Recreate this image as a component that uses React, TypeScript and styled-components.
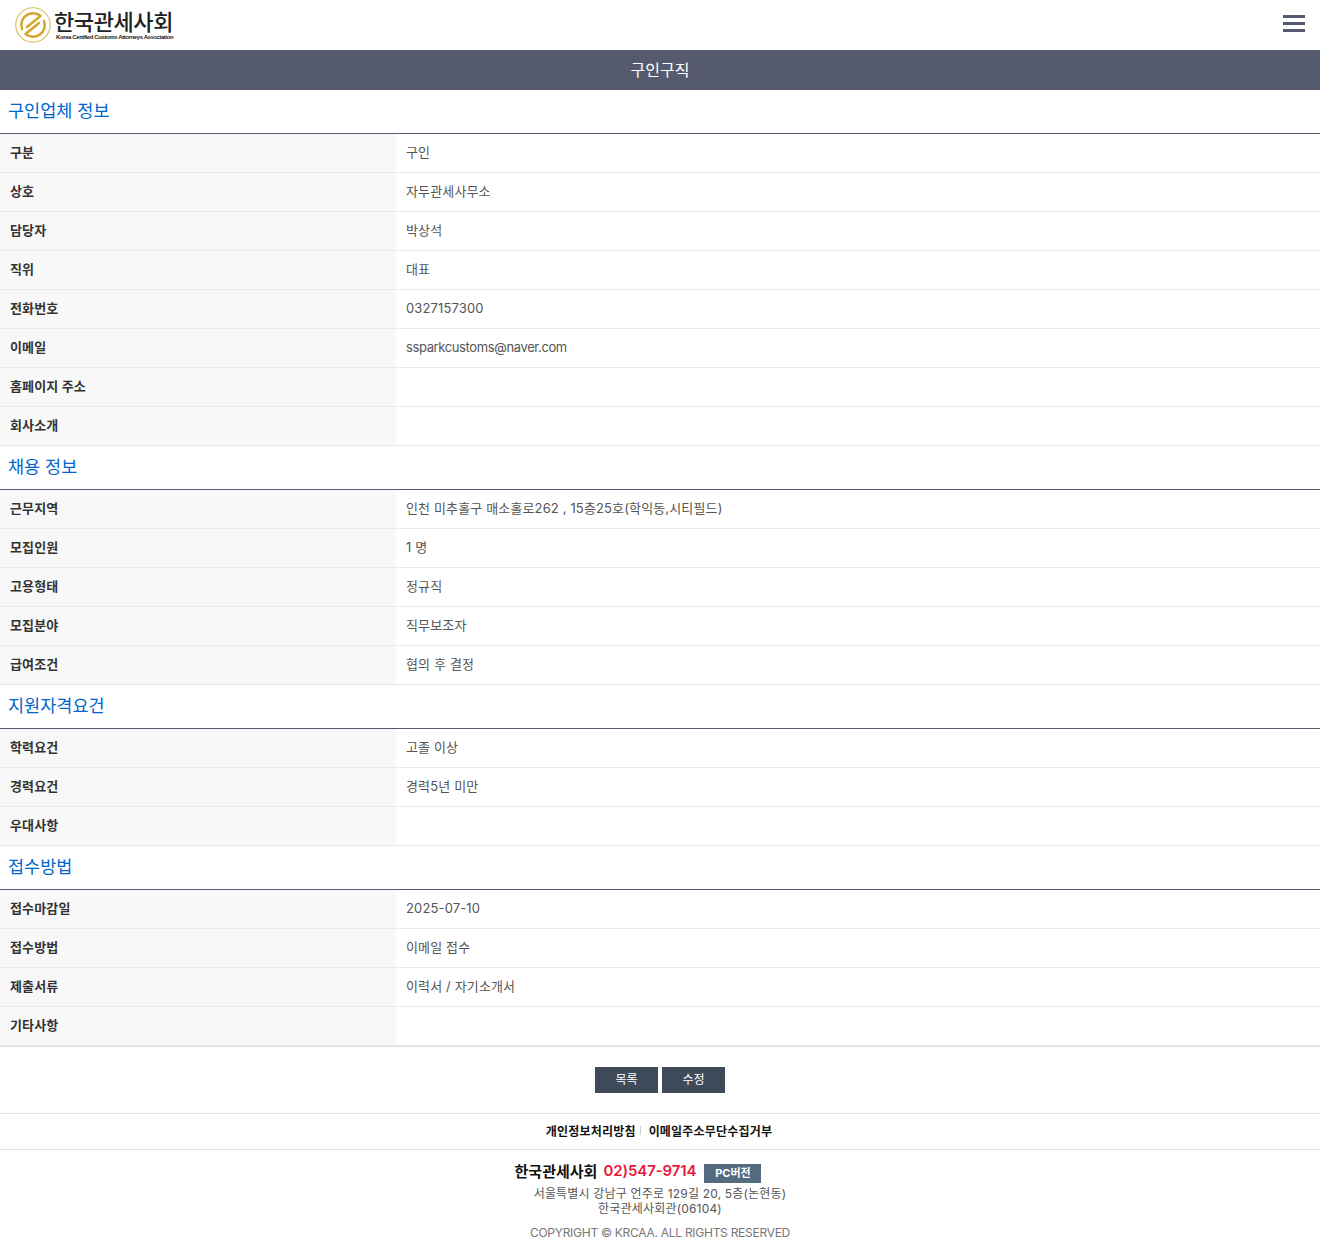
import * as React from "react";
import styled, { createGlobalStyle } from "styled-components";

const Global = createGlobalStyle`
    html, body { margin: 0; padding: 0; background: #fff; }
    body { font-family: Inter, "Noto Sans CJK KR", "Noto Sans", sans-serif; }
`;

const Page = styled.div`
    width: 1320px;
    height: 1254px;
    overflow: hidden;
`;

const Header = styled.header`
    height: 50px;
    padding: 0 15px;
    box-sizing: border-box;
    display: flex;
    align-items: center;
    justify-content: space-between;
`;

const Logo = styled.div`
    display: flex;
    align-items: center;
    gap: 3px;
`;

const LogoText = styled.div`
    display: flex;
    flex-direction: column;
    color: #222;
`;

const LogoName = styled.div`
    font-size: 22px;
    line-height: 24px;
    font-weight: 500;
    letter-spacing: -0.4px;
`;

const LogoSub = styled.div`
    font-family: "Liberation Sans", sans-serif;
    font-size: 6px;
    line-height: 7px;
    letter-spacing: -0.4px;
    font-weight: 700;
    white-space: nowrap;
    margin-left: 2px;
`;

const Burger = styled.div`
    width: 22px;
    display: flex;
    flex-direction: column;
    gap: 4px;
    margin-bottom: 3px;
    span {
        height: 3px;
        background: #555a6e;
    }
`;

const TitleBar = styled.h1`
    margin: 0;
    height: 40px;
    background: #555a6e;
    color: #fff;
    font-size: 16px;
    font-weight: 400;
    line-height: 40px;
    text-align: center;
`;

const SectionTitle = styled.h2`
    margin: 0;
    height: 44px;
    box-sizing: border-box;
    padding-left: 8px;
    border-bottom: 1px solid #555a6e;
    color: #0066cc;
    font-size: 17.5px;
    font-weight: 400;
    line-height: 41px;
`;

const Row = styled.div`
    display: flex;
    height: 39px;
    box-sizing: border-box;
    border-bottom: 1px solid #e9e9e9;
`;

const Label = styled.div`
    width: 396px;
    padding-left: 10px;
    box-sizing: border-box;
    background: #f8f8f8;
    color: #333;
    font-size: 13px;
    font-weight: 700;
    line-height: 36px;
    letter-spacing: 0.15px;
`;

const Value = styled.div<{ $latin?: boolean }>`
    flex: 1;
    padding-left: 10px;
    color: #555;
    font-size: 13px;
    line-height: 36px;
    letter-spacing: ${(p) => (p.$latin ? "-0.38px" : "0.14px")};
`;

const Buttons = styled.div`
    border-top: 1px solid #ddd;
    height: 67px;
    display: flex;
    justify-content: center;
    align-items: flex-start;
    gap: 4px;
    padding-top: 20px;
    box-sizing: border-box;
`;

const Button = styled.button`
    width: 63px;
    height: 26px;
    border: 0;
    padding: 0 0 3px;
    background: #3f4a5b;
    color: #fff;
    font-family: inherit;
    font-size: 12px;
`;

const Links = styled.div`
    border-top: 1px solid #e2e2e2;
    border-bottom: 1px solid #e2e2e2;
    height: 37px;
    padding: 0 2px 2px 0;
    box-sizing: border-box;
    display: flex;
    justify-content: center;
    align-items: center;
    font-size: 12px;
    font-weight: 700;
    letter-spacing: 0.2px;
    color: #111;
`;

const Divider = styled.span`
    width: 1px;
    height: 9px;
    background: #ccc;
    margin: 0 8px 0 4px;
`;

const Footer = styled.footer`
    text-align: center;
    padding-top: 8px;
`;

const FooterHead = styled.div`
    display: flex;
    justify-content: center;
    align-items: center;
    height: 24px;
    margin-bottom: 4px;
    padding-right: 44px;
    font-size: 15px;
    font-weight: 700;
    color: #111;
`;

const Phone = styled.span`
    color: #e8173c;
    font-weight: 600;
    margin-left: 6px;
    letter-spacing: -0.1px;
`;

const PcButton = styled.span`
    width: 57px;
    height: 19px;
    margin-left: 8px;
    margin-top: 7px;
    background: #546a7f;
    color: #fff;
    font-size: 11px;
    font-weight: 700;
    line-height: 19px;
`;

const Address = styled.div`
    color: #555;
    font-size: 12px;
    line-height: 15px;
    letter-spacing: 0.18px;
`;

const Copyright = styled.div`
    margin-top: 9px;
    color: #777;
    font-size: 12px;
    line-height: 16px;
    letter-spacing: -0.27px;
`;

const LogoMark = () => (
    <svg width="36" height="36" viewBox="0 0 36 36">
        <circle cx="18" cy="18" r="17.2" fill="none" stroke="#dcbc5c" strokeWidth="1.1" />
        <path
            d="M7 22 A11.7 11.7 0 0 1 25.5 9 L12 20 M29 14 A11.7 11.7 0 0 1 10.5 27 L24 16"
            fill="none"
            stroke="#d4a72c"
            strokeWidth="2.5"
            strokeLinejoin="round"
            strokeLinecap="round"
        />
    </svg>
);

const sections: { title: string; rows: [string, string][] }[] = [
    {
        title: "구인업체 정보",
        rows: [
            ["구분", "구인"],
            ["상호", "자두관세사무소"],
            ["담당자", "박상석"],
            ["직위", "대표"],
            ["전화번호", "0327157300"],
            ["이메일", "ssparkcustoms@naver.com"],
            ["홈페이지 주소", ""],
            ["회사소개", ""],
        ],
    },
    {
        title: "채용 정보",
        rows: [
            ["근무지역", "인천 미추홀구 매소홀로262 , 15층25호(학익동,시티필드)"],
            ["모집인원", "1 명"],
            ["고용형태", "정규직"],
            ["모집분야", "직무보조자"],
            ["급여조건", "협의 후 결정"],
        ],
    },
    {
        title: "지원자격요건",
        rows: [
            ["학력요건", "고졸 이상"],
            ["경력요건", "경력5년 미만"],
            ["우대사항", ""],
        ],
    },
    {
        title: "접수방법",
        rows: [
            ["접수마감일", "2025-07-10"],
            ["접수방법", "이메일 접수"],
            ["제출서류", "이력서 / 자기소개서"],
            ["기타사항", ""],
        ],
    },
];

export default function App() {
    return (
        <Page>
            <Global />
            <Header>
                <Logo>
                    <LogoMark />
                    <LogoText>
                        <LogoName>한국관세사회</LogoName>
                        <LogoSub>Korea Certified Customs Attorneys Association</LogoSub>
                    </LogoText>
                </Logo>
                <Burger>
                    <span />
                    <span />
                    <span />
                </Burger>
            </Header>
            <TitleBar>구인구직</TitleBar>
            {sections.map((section) => (
                <section key={section.title}>
                    <SectionTitle>{section.title}</SectionTitle>
                    {section.rows.map(([label, value]) => (
                        <Row key={label}>
                            <Label>{label}</Label>
                            <Value $latin={label === "이메일"}>{value}</Value>
                        </Row>
                    ))}
                </section>
            ))}
            <Buttons>
                <Button>목록</Button>
                <Button>수정</Button>
            </Buttons>
            <Links>
                개인정보처리방침
                <Divider />
                이메일주소무단수집거부
            </Links>
            <Footer>
                <FooterHead>
                    한국관세사회
                    <Phone>02)547-9714</Phone>
                    <PcButton>PC버전</PcButton>
                </FooterHead>
                <Address>서울특별시 강남구 언주로 129길 20, 5층(논현동)</Address>
                <Address>한국관세사회관(06104)</Address>
                <Copyright>COPYRIGHT © KRCAA. ALL RIGHTS RESERVED</Copyright>
            </Footer>
        </Page>
    );
}
